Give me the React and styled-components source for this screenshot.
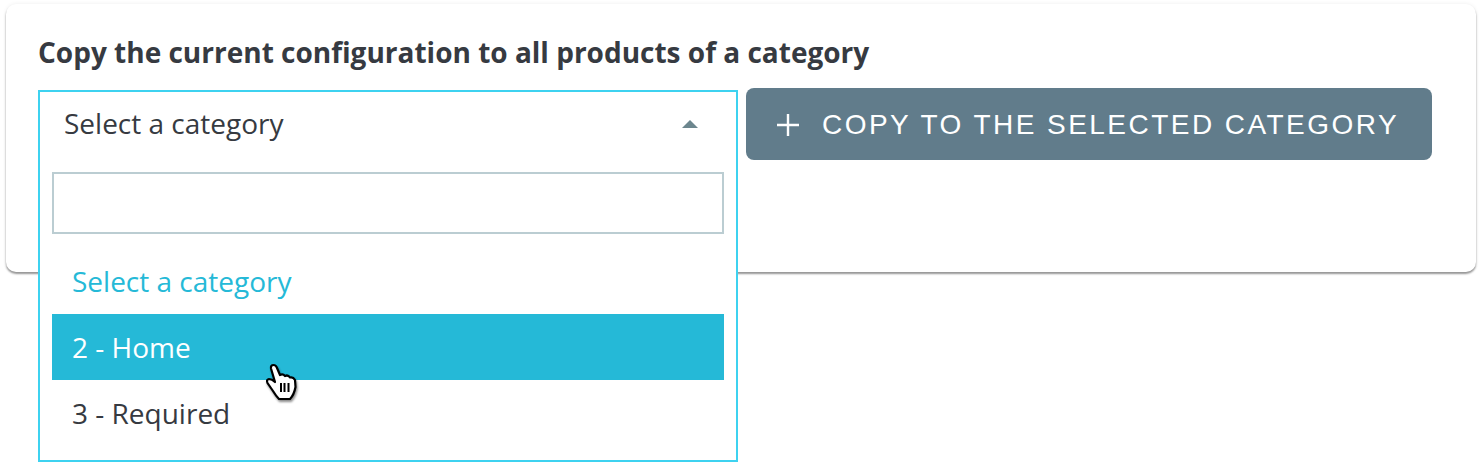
import * as React from "react";
import styled, { createGlobalStyle } from "styled-components";

const GlobalStyle = createGlobalStyle`
  html, body {
    margin: 0;
    padding: 0;
    background: #fff;
  }
  body {
    font-family: "Open Sans", "Liberation Sans", sans-serif;
    color: #363a41;
  }
`;

const Page = styled.div`
  position: relative;
  width: 1482px;
  height: 462px;
  padding: 4px 6px 0;
  box-sizing: border-box;
  overflow: hidden;
`;

const Card = styled.section`
  height: 268px;
  box-sizing: border-box;
  padding: 29px 32px 0;
  background: #fff;
  border-radius: 10px;
  box-shadow: 0 2px 2px rgba(0, 0, 0, 0.4), 0 0 4px rgba(0, 0, 0, 0.07);
`;

const Title = styled.h2`
  margin: 0 0 17px;
  font-size: 28px;
  line-height: 38px;
  font-weight: 700;
  color: #363a41;
`;

const Row = styled.div`
  display: flex;
  align-items: flex-start;
  gap: 8px;
`;

const SelectBox = styled.div`
  position: relative;
  z-index: 2;
  flex: none;
  width: 700px;
  height: 372px;
  margin-top: 2px;
  box-sizing: border-box;
  padding: 0 12px 14px;
  background: #fff;
  border: 2px solid #3ed2f0;
`;

const SelectHead = styled.div`
  display: flex;
  align-items: center;
  justify-content: space-between;
  height: 64px;
  box-sizing: border-box;
  padding: 0 26px 2px 12px;
  font-size: 28px;
`;

const Arrow = styled.span`
  width: 0;
  height: 0;
  margin-top: 2px;
  border-left: 8px solid transparent;
  border-right: 8px solid transparent;
  border-bottom: 8px solid #6c868e;
`;

const SearchInput = styled.input`
  display: block;
  width: 100%;
  height: 62px;
  margin: 16px 0 14px;
  box-sizing: border-box;
  border: 2px solid #bbcdd2;
  background: #fff;
  outline: none;
`;

const Option = styled.div`
  height: 66px;
  padding: 0 20px;
  font-size: 28px;
  line-height: 66px;
  color: ${(p) => (p.$active ? "#fff" : p.$muted ? "#25b9d7" : "#363a41")};
  background: ${(p) => (p.$active ? "#25b9d7" : "transparent")};
`;

const CopyButton = styled.button`
  display: flex;
  flex: none;
  align-items: center;
  gap: 23px;
  width: 686px;
  height: 72px;
  padding: 2px 0 0 31px;
  box-sizing: border-box;
  border: 0;
  border-radius: 8px;
  background: #617c8b;
  color: #fff;
  font-family: "Liberation Sans", Arial, sans-serif;
  font-size: 28px;
  letter-spacing: 2.46px;
  white-space: nowrap;
`;

const Pointer = styled.svg`
  position: absolute;
  z-index: 3;
  left: 264px;
  top: 362px;
  filter: drop-shadow(1px 2px 1px rgba(0, 0, 0, 0.45));
`;

export default function App() {
  return (
    <Page>
      <GlobalStyle />
      <Card>
        <Title>Copy the current configuration to all products of a category</Title>
        <Row>
          <SelectBox>
            <SelectHead>
              Select a category
              <Arrow />
            </SelectHead>
            <SearchInput />
            <Option $muted>Select a category</Option>
            <Option $active>2 - Home</Option>
            <Option>3 - Required</Option>
          </SelectBox>
          <CopyButton>
            <svg width="22" height="22" viewBox="0 0 22 22" fill="none" stroke="#fff" strokeWidth="2.4">
              <path d="M11 0v22M0 11h22" />
            </svg>
            COPY TO THE SELECTED CATEGORY
          </CopyButton>
        </Row>
      </Card>
      <Pointer width="36" height="40" viewBox="0 0 36 40">
        <path
          d="M11 20 L7 6.5 Q6.5 3 9.5 3 Q12 3 13 6 L16 13 Q19 11.5 21 14 Q24 12.5 26 15.5 Q29 14.5 31 18 L31.5 25 Q30 33 26 37 L15 37 Q12 34 9 29 L3.5 21 Q2 17.5 5 17 Q8 17 11 20 Z"
          fill="#fff"
          stroke="#000"
          strokeWidth="2.2"
          strokeLinejoin="round"
        />
        <path d="M17 21v9M20.5 21v9M24.5 21v9" stroke="#000" strokeWidth="2" fill="none" />
      </Pointer>
    </Page>
  );
}
